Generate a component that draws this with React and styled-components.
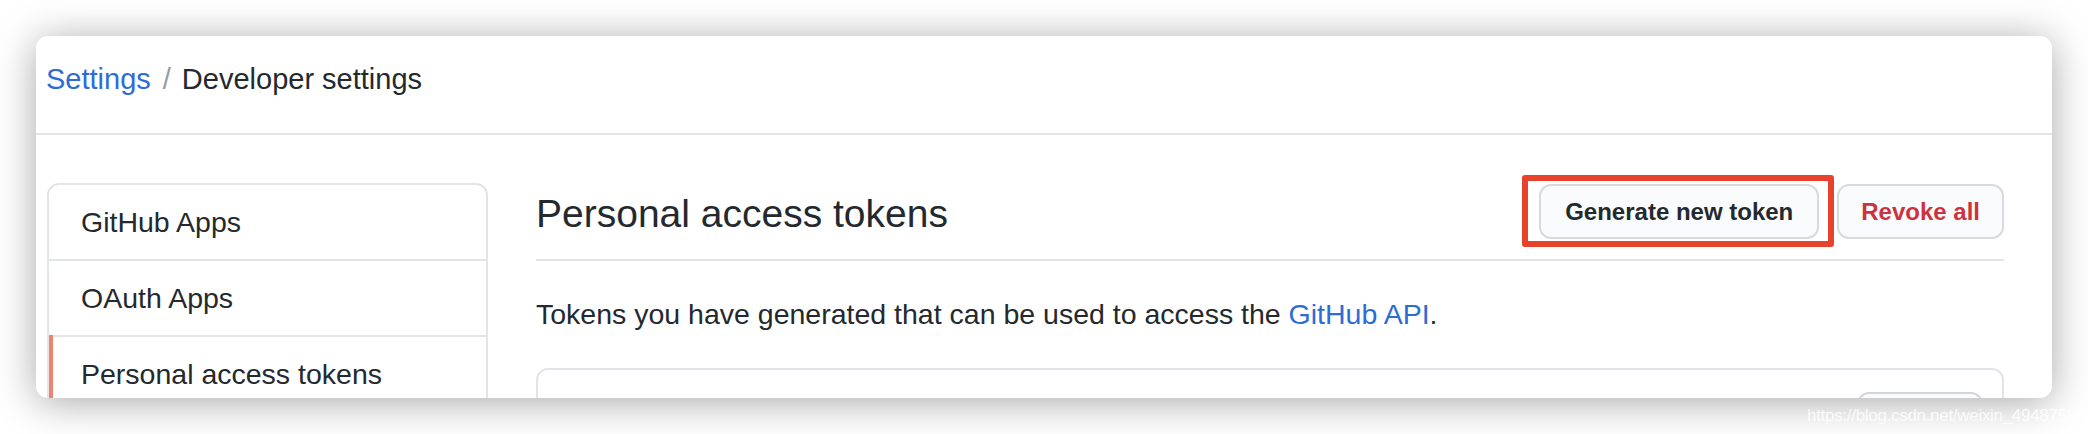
import React from "react";
import styled, { createGlobalStyle, css } from "styled-components";

const Global = createGlobalStyle`
  html, body { margin: 0; padding: 0; background: #ffffff; }
  body {
    width: 2088px;
    height: 434px;
    overflow: hidden;
    font-family: "Liberation Sans", Arial, sans-serif;
    color: #24292e;
  }
  * { box-sizing: border-box; }
`;

const Stage = styled.div`
  position: relative;
  width: 2088px;
  height: 434px;
  padding: 36px 0 0 36px;
`;

const Window = styled.div`
  width: 2016px;
  height: 362px;
  background: #ffffff;
  border-radius: 12px;
  box-shadow: 0 4px 40px rgba(0, 0, 0, 0.35);
  overflow: hidden;
  display: flex;
  flex-direction: column;
`;

const Header = styled.header`
  flex-shrink: 0;
  height: 99px;
  padding: 22px 10px 0;
  border-bottom: 2px solid #e1e4e8;
  font-size: 29px;
  line-height: 43.5px;
  white-space: nowrap;
`;

const Crumb = styled.a`
  color: #2d6cd7;
  text-decoration: none;
`;

const Sep = styled.span`
  color: #959da5;
  margin: 0 11px 0 12px;
`;

const Current = styled.span`
  color: #24292e;
`;

const Body = styled.div`
  display: flex;
  gap: 48px;
  padding: 48px 48px 0 11px;
`;

const SideNav = styled.nav`
  width: 441px;
  flex-shrink: 0;
  align-self: flex-start;
  border: 2px solid #e1e4e8;
  border-radius: 12px;
  overflow: hidden;
`;

const NavItem = styled.a`
  position: relative;
  display: block;
  padding: 16px 32px;
  font-size: 28.5px;
  line-height: 42px;
  color: #24292e;
  text-decoration: none;
  white-space: nowrap;
  & + & {
    border-top: 2px solid #e1e4e8;
  }
  ${(p) =>
    p.$active &&
    css`
      &::before {
        content: "";
        position: absolute;
        top: -2px;
        bottom: 0;
        left: 0;
        width: 4px;
        background: #f0826e;
      }
    `}
`;

const Main = styled.main`
  flex: 1;
  min-width: 0;
`;

const Subhead = styled.div`
  display: flex;
  align-items: flex-start;
  padding-bottom: 15px;
  border-bottom: 2px solid #e1e4e8;
`;

const Heading = styled.h2`
  flex: 1;
  margin: 0;
  font-size: 39px;
  font-weight: 400;
  line-height: 61px;
  color: #24292e;
  white-space: nowrap;
`;

const Actions = styled.div`
  display: flex;
  gap: 18px;
  margin-top: 1px;
`;

const Highlighted = styled.div`
  position: relative;
  display: flex;
`;

const Marker = styled.span`
  position: absolute;
  top: -9px;
  left: -17px;
  right: -15px;
  bottom: -8px;
  border: 6px solid #e8412c;
  border-radius: 3px;
  pointer-events: none;
`;

const Button = styled.button`
  height: 55px;
  padding: 0 ${(p) => (p.$danger ? "22px" : "24px")};
  font-family: "Liberation Sans", Arial, sans-serif;
  font-size: 24px;
  font-weight: 700;
  line-height: 1;
  color: ${(p) => (p.$danger ? "#cc3340" : "#24292e")};
  background: #fafbfc;
  border: 2px solid #d8dadd;
  border-radius: 12px;
  white-space: nowrap;
  cursor: pointer;
`;

const Lead = styled.p`
  margin: 32px 0 0;
  font-size: 28.5px;
  line-height: 42.75px;
  color: #24292e;
  white-space: nowrap;
`;

const Link = styled.a`
  color: #2d6cd7;
  text-decoration: none;
`;

const TokenBox = styled.div`
  margin-top: 32px;
  border: 2px solid #e1e4e8;
  border-radius: 12px;
  padding: 22px 19px;
`;

const TokenRow = styled.div`
  display: flex;
  justify-content: flex-end;
`;

const SmallButton = styled(Button)`
  width: 126px;
  height: 56px;
  border-color: #d1d5da;
`;

const Watermark = styled.div`
  position: absolute;
  left: 1807px;
  top: 407px;
  font-family: "Liberation Sans", Arial, sans-serif;
  font-size: 17px;
  line-height: 18px;
  letter-spacing: -0.3px;
  color: rgba(255, 255, 255, 0.85);
  white-space: nowrap;
  pointer-events: none;
`;

export default function App() {
  return (
    <Stage>
      <Global />
      <Window>
        <Header>
          <Crumb href="#">Settings</Crumb>
          <Sep>/</Sep>
          <Current>Developer settings</Current>
        </Header>
        <Body>
          <SideNav>
            <NavItem href="#">GitHub Apps</NavItem>
            <NavItem href="#">OAuth Apps</NavItem>
            <NavItem href="#" $active>
              Personal access tokens
            </NavItem>
          </SideNav>
          <Main>
            <Subhead>
              <Heading>Personal access tokens</Heading>
              <Actions>
                <Highlighted>
                  <Button>Generate new token</Button>
                  <Marker />
                </Highlighted>
                <Button $danger>Revoke all</Button>
              </Actions>
            </Subhead>
            <Lead>
              Tokens you have generated that can be used to access the{" "}
              <Link href="#">GitHub API</Link>.
            </Lead>
            <TokenBox>
              <TokenRow>
                <SmallButton $danger aria-label="Delete" />
              </TokenRow>
            </TokenBox>
          </Main>
        </Body>
      </Window>
      <Watermark>https://blog.csdn.net/weixin_49487589</Watermark>
    </Stage>
  );
}
